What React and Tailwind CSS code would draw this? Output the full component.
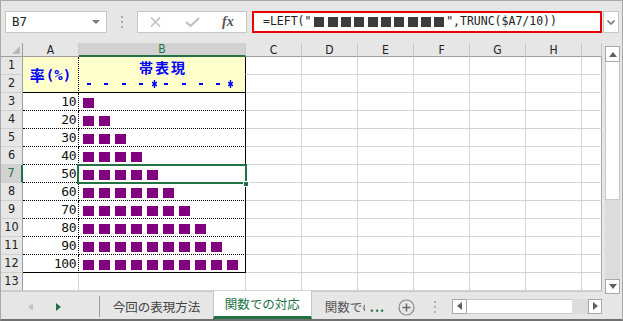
import React from "react";

// fonts
const MONO = "font-['DejaVu_Sans_Mono','Liberation_Mono',monospace]";
const NARROW = "font-['Liberation_Sans_Narrow','DejaVu_Sans_Condensed','Liberation_Sans',sans-serif]";
const JP = "font-['Noto_Sans_CJK_JP','Noto_Sans',sans-serif]";

const rates = [10, 20, 30, 40, 50, 60, 70, 80, 90, 100];
const colHeads = ["A", "B", "C", "D", "E", "F", "G", "H", ""];

const Tri = ({ dir, color }) => (
    <svg width="5" height="8" viewBox="0 0 5 8">
        <path d={dir === "left" ? "M5 0V8L0 4z" : "M0 0V8L5 4z"} fill={color} />
    </svg>
);

function FormulaBar() {
    return (
        <div className="h-[42px] flex items-start pt-[10px] shrink-0">
            {/* name box */}
            <div className="ml-[4px] w-[102px] h-[22px] bg-white border border-[#c6c6c6] flex items-center justify-between pl-[6px] pr-[6px]">
                <span className={`${MONO} text-[12.5px] text-[#222] leading-none`}>B7</span>
                <svg width="8" height="4" viewBox="0 0 8 4"><path d="M0 0H8L4 4z" fill="#7a7a7a" /></svg>
            </div>
            <div className="ml-[14px] mt-[5px] flex flex-col gap-[3px]">
                <span className="w-[2px] h-[2px] bg-[#a8a8a8]" />
                <span className="w-[2px] h-[2px] bg-[#a8a8a8]" />
                <span className="w-[2px] h-[2px] bg-[#a8a8a8]" />
            </div>
            {/* cancel / enter / fx */}
            <div className="ml-[14px] w-[110px] h-[22px] bg-white border border-[#c6c6c6] flex items-center">
                <svg className="ml-[12px]" width="11" height="10" viewBox="0 0 11 10">
                    <path d="M1 0.5L10 9.5M10 0.5L1 9.5" stroke="#c2c2c2" strokeWidth="1.6" />
                </svg>
                <svg className="ml-[24px]" width="15" height="10" viewBox="0 0 15 10">
                    <path d="M1 5L5.5 9L14 1" stroke="#c2c2c2" strokeWidth="2.2" fill="none" />
                </svg>
                <span className="ml-[22px] font-['Liberation_Serif',serif] italic font-bold text-[14px] text-[#555] leading-none">fx</span>
            </div>
            {/* formula */}
            <div className="ml-[5px] w-[350px] h-[22px] bg-white border-2 border-[#e60000] flex items-center pl-[9px]">
                <span className={`${MONO} text-[11.5px] text-[#222] leading-none whitespace-pre`}>=LEFT(&quot;</span>
                <span className="flex gap-[3.3px] ml-[3px] mr-[2px]">
                    {Array.from({ length: 10 }).map((_, i) => (
                        <span key={i} className="w-[10px] h-[10px] bg-[#3c3c3c]" />
                    ))}
                </span>
                <span className={`${MONO} text-[11.5px] text-[#222] leading-none whitespace-pre`}>&quot;,TRUNC($A7/10))</span>
            </div>
            <div className="ml-[1px] w-[16px] h-[22px] bg-white border border-[#c6c6c6] flex items-center justify-center">
                <svg width="8" height="5" viewBox="0 0 8 5"><path d="M0.5 0.5L4 4L7.5 0.5" stroke="#777" strokeWidth="1.6" fill="none" /></svg>
            </div>
        </div>
    );
}

const Blank = ({ last }) => (
    <div className={`bg-white border-r border-b border-b-[#d4d4d4] ${last ? "border-r-[#a8a8a8]" : "border-r-[#d4d4d4]"}`} />
);

function RowHead({ n, active }) {
    return (
        <div
            className={`flex items-center justify-center border-b border-b-[#cfcfcf] ${NARROW} text-[12.5px] leading-none ${active
                ? "bg-[#d2d2d2] text-[#217346] border-r-2 border-r-[#217346]"
                : "bg-[#e6e6e6] text-[#222] border-r border-r-[#9e9e9e]"
                }`}
        >
            {n}
        </div>
    );
}

function Blanks() {
    return (
        <>
            {[0, 1, 2, 3, 4, 5, 6].map((i) => (
                <Blank key={i} last={i === 6} />
            ))}
        </>
    );
}

const Dash = ({ ml }) => <span className={`w-[4px] h-[2px] bg-[#0000ff] ${ml}`} />;
const Star = ({ ml }) => (
    <svg className={ml} width="5" height="8" viewBox="0 0 5 8">
        <path d="M2.5 0V8M0 2L5 6M0 6L5 2" stroke="#0000ff" strokeWidth="1.4" />
    </svg>
);

function Sheet() {
    return (
        <div className="h-[248px] grid grid-cols-[22px_56px_167px_56px_56px_56px_56px_56px_56px_20px] grid-rows-[14px_repeat(13,18px)] overflow-hidden">
            {/* header row */}
            <div className="bg-[#e6e6e6] border-r border-b border-[#9e9e9e] flex items-end justify-end pr-[2px] pb-[2px]">
                <svg width="8" height="8" viewBox="0 0 8 8"><path d="M8 0V8H0z" fill="#b9b9b9" /></svg>
            </div>
            {colHeads.map((c, i) => (
                <div
                    key={i}
                    className={`flex items-center justify-center ${NARROW} text-[12px] leading-none border-r ${i === 1
                        ? "bg-[#d2d2d2] text-[#217346] border-b-2 border-b-[#217346] border-r-[#c8c8c8]"
                        : "bg-[#e6e6e6] text-[#222] border-b border-b-[#9e9e9e] border-r-[#c8c8c8]"
                        }`}
                >
                    {c}
                </div>
            ))}

            {/* row 1 */}
            <RowHead n="1" />
            <div className="row-span-2 bg-[#ffffcc] border-r border-b border-dotted border-black [border-bottom-style:solid] flex items-center justify-center text-[#0000ff] font-bold">
                <span className={`${JP} text-[15px] leading-none`}>率</span>
                <span className={`${MONO} text-[14px] leading-none ml-[1px]`}>(%)</span>
            </div>
            <div className="bg-[#ffffcc] border-r border-r-black border-b border-b-[#ffffcc] flex items-end justify-center">
                <span className={`${JP} font-bold text-[14px] tracking-[2px] pl-[2px] leading-none text-[#0000ff]`}>帯表現</span>
            </div>
            <Blanks />

            {/* row 2 */}
            <RowHead n="2" />
            <div className="bg-[#ffffcc] border-r border-b border-black flex items-center pt-[1px]">
                <Dash ml="ml-[8px]" />
                <Dash ml="ml-[13px]" />
                <Dash ml="ml-[14px]" />
                <Dash ml="ml-[13px]" />
                <Star ml="ml-[9px]" />
                <Dash ml="ml-[7px]" />
                <Dash ml="ml-[14px]" />
                <Dash ml="ml-[13px]" />
                <Dash ml="ml-[13px]" />
                <Star ml="ml-[8px]" />
            </div>
            <Blanks />

            {/* rows 3 - 12 */}
            {rates.map((r, idx) => {
                const rowNo = idx + 3;
                const last = rowNo === 12;
                return (
                    <React.Fragment key={r}>
                        <RowHead n={rowNo} active={rowNo === 7} />
                        <div
                            className={`bg-white border-r border-b border-dotted border-black ${last ? "[border-bottom-style:solid]" : ""} flex items-center justify-end pr-[2px] ${MONO} text-[13px] tracking-[-0.5px] text-[#111] leading-none`}
                        >
                            {r}
                        </div>
                        <div
                            className={`relative bg-white border-r border-b border-black ${last ? "" : "[border-bottom-style:dotted]"} flex items-start gap-[5px] pl-[4px] pt-[5px]`}
                        >
                            {Array.from({ length: r / 10 }).map((_, i) => (
                                <span key={i} className="w-[11px] h-[10px] bg-[#800080] shrink-0" />
                            ))}
                            {rowNo === 7 && (
                                <>
                                    <div className="absolute left-[-2px] top-[-1px] w-[170px] h-[20px] border-2 border-[#217346] z-10 pointer-events-none" />
                                    <div className="absolute left-[164px] top-[16px] w-[6px] h-[6px] bg-[#217346] border border-white z-10" />
                                </>
                            )}
                        </div>
                        <Blanks />
                    </React.Fragment>
                );
            })}

            {/* row 13 */}
            <RowHead n="13" />
            <Blank />
            <Blank />
            <Blanks />
        </div>
    );
}

function TabBar() {
    return (
        <div className={`h-[28px] flex items-stretch ${JP} text-[12.5px]`}>
            <div className="w-[99px] flex items-center border-t border-[#c8c8c8] pt-[3px]">
                <span className="ml-[27px]"><Tri dir="left" color="#c4c4c4" /></span>
                <span className="ml-[23px]"><Tri dir="right" color="#217346" /></span>
            </div>
            <div className="w-[1px] border-t border-[#c8c8c8] flex flex-col">
                <span className="mt-[4px] h-[21px] w-[1px] bg-[#9a9a9a]" />
            </div>
            <div className="w-[113px] border-t border-[#c8c8c8] flex items-center justify-center text-[#444] pt-[3px]">
                今回の表現方法
            </div>
            <div className="w-[100px] bg-white border-l border-r border-[#c8c8c8] border-b-[3px] border-b-[#217346] flex items-center justify-center text-[#217346] pt-[2px]">
                関数での対応
            </div>
            <div className="flex-1 flex items-center border-t border-[#c8c8c8] pt-[3px]">
                <span className="ml-[13px] w-[40px] overflow-hidden whitespace-nowrap text-[#555]">関数での</span>
                <span className="ml-[5px] text-[#217346] font-bold tracking-[1px] leading-none">...</span>
                <svg className="ml-[13px]" width="17" height="17" viewBox="0 0 17 17">
                    <circle cx="8.5" cy="8.5" r="7.5" stroke="#8a8a8a" strokeWidth="1.2" fill="none" />
                    <path d="M8.5 4.5V12.5M4.5 8.5H12.5" stroke="#6a6a6a" strokeWidth="1.5" />
                </svg>
                <div className="ml-[19px] flex flex-col gap-[3px]">
                    <span className="w-[2px] h-[2px] bg-[#b0b0b0]" />
                    <span className="w-[2px] h-[2px] bg-[#b0b0b0]" />
                    <span className="w-[2px] h-[2px] bg-[#b0b0b0]" />
                </div>
                {/* horizontal scrollbar */}
                <div className="ml-[16px] flex h-[15px] mb-[2px]">
                    <div className="w-[15px] bg-white border border-[#a8a8a8] flex items-center justify-center">
                        <Tri dir="left" color="#606060" />
                    </div>
                    <div className="w-[105px] bg-white border-y border-[#c8c8c8]" />
                    <div className="w-[16px] bg-[#dcdcdc]" />
                    <div className="w-[14px] bg-white border border-[#a8a8a8] flex items-center justify-center">
                        <Tri dir="right" color="#606060" />
                    </div>
                </div>
            </div>
        </div>
    );
}

function VScroll() {
    return (
        <div className="w-[20px] flex flex-col pt-[3px] pl-[3px] pr-[2px] pb-[25px]">
            <div className="h-[16px] bg-white border border-[#a8a8a8] flex items-center justify-center">
                <svg width="8" height="5" viewBox="0 0 8 5"><path d="M0 5H8L4 0z" fill="#606060" /></svg>
            </div>
            <div className="h-[138px] bg-white border-x border-b border-[#c8c8c8]" />
            <div className="flex-1 bg-[#dcdcdc]" />
            <div className="h-[15px] bg-white border border-[#a8a8a8] flex items-center justify-center">
                <svg width="8" height="5" viewBox="0 0 8 5"><path d="M0 0H8L4 5z" fill="#606060" /></svg>
            </div>
        </div>
    );
}

export default function App() {
    return (
        <div className="w-[623px] h-[321px] flex flex-col bg-[#e6e6e6] border border-[#a9a9a9] border-b-2 border-b-[#707070] overflow-hidden">
            <FormulaBar />
            <div className="flex flex-1 min-h-0">
                <div className="w-[601px] flex flex-col">
                    <Sheet />
                    <TabBar />
                </div>
                <VScroll />
            </div>
        </div>
    );
}
